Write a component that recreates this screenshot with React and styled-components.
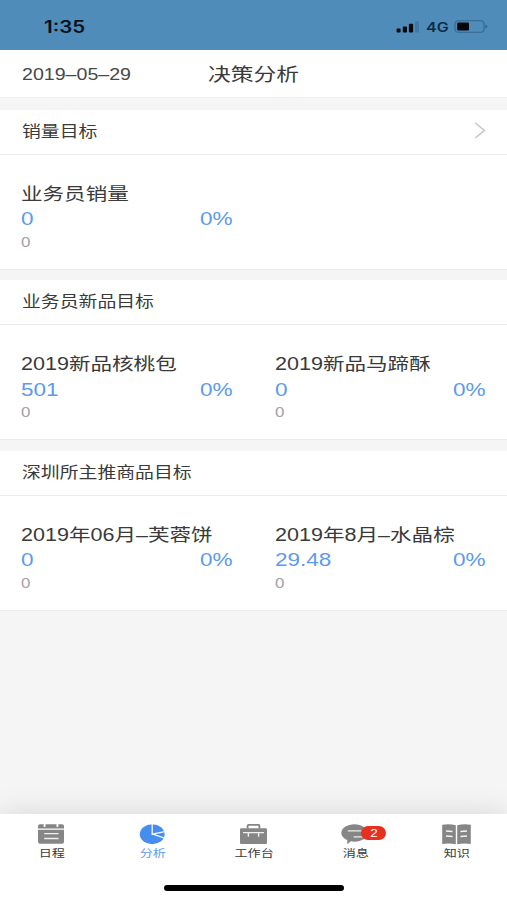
import styled, { createGlobalStyle } from "styled-components";

const sections = [
    {
        title: "销量目标",
        hasLink: true,
        items: [{ name: "业务员销量", value: "0", percent: "0%", target: "0" }],
    },
    {
        title: "业务员新品目标",
        items: [
            { name: "2019新品核桃包", value: "501", percent: "0%", target: "0" },
            { name: "2019新品马蹄酥", value: "0", percent: "0%", target: "0" },
        ],
    },
    {
        title: "深圳所主推商品目标",
        items: [
            { name: "2019年06月–芙蓉饼", value: "0", percent: "0%", target: "0" },
            { name: "2019年8月–水晶棕", value: "29.48", percent: "0%", target: "0" },
        ],
    },
];

const tabs = [
    { label: "日程", Icon: CalendarIcon },
    { label: "分析", Icon: PieIcon, active: true },
    { label: "工作台", Icon: ToolboxIcon },
    { label: "消息", Icon: ChatIcon, badge: 2 },
    { label: "知识", Icon: BookIcon },
];

export default function App() {
    return (
        <Container>
            <GlobalStyle />
            <StatusBar>
                <Clock>1:35</Clock>
                <StatusIcons>
                    <SignalIcon />
                    <Network>4G</Network>
                    <BatteryIcon />
                </StatusIcons>
            </StatusBar>
            <Header>
                <HeaderDate>2019–05–29</HeaderDate>
                <HeaderTitle>决策分析</HeaderTitle>
            </Header>
            <Main>
                {sections.map((section) => (
                    <Section key={section.title}>
                        <SectionHead>
                            <SectionTitle>{section.title}</SectionTitle>
                            {section.hasLink && <ChevronIcon />}
                        </SectionHead>
                        <SectionBody>
                            {section.items.map((item) => (
                                <Item key={item.name}>
                                    <ItemName>{item.name}</ItemName>
                                    <ItemRow>
                                        <ItemValue>{item.value}</ItemValue>
                                        <ItemValue $right>{item.percent}</ItemValue>
                                    </ItemRow>
                                    <ItemTarget>{item.target}</ItemTarget>
                                </Item>
                            ))}
                        </SectionBody>
                    </Section>
                ))}
            </Main>
            <TabBar>
                {tabs.map(({ label, Icon, active, badge }) => (
                    <Tab key={label} $active={active}>
                        <TabIcon>
                            <Icon />
                            {badge && (
                                <Badge>
                                    <BadgeText>{badge}</BadgeText>
                                </Badge>
                            )}
                        </TabIcon>
                        <TabLabel>{label}</TabLabel>
                    </Tab>
                ))}
            </TabBar>
            <BottomArea>
                <HomeIndicator />
            </BottomArea>
        </Container>
    );
}

function SignalIcon() {
    return (
        <svg width="23" height="12" viewBox="0 0 23 12">
            <rect x="0.6" y="7.6" width="4" height="4" rx="0.8" fill="#050a10" />
            <rect x="6.8" y="5.6" width="4.200" height="6" rx="0.8" fill="#050a10" />
            <rect x="12.900" y="2.800" width="4.200" height="8.800" rx="0.8" fill="#050a10" />
            <rect x="19" y="0.3" width="4" height="11.300" rx="0.8" fill="#4279a3" />
        </svg>
    );
}

function BatteryIcon() {
    return (
        <svg width="34" height="13" viewBox="0 0 34 13">
            <rect x="1" y="0.8" width="29" height="11.4" rx="3.2" fill="none" stroke="#34668e" strokeWidth="1.1" />
            <rect x="3.2" y="2.5" width="11.8" height="8" rx="1.3" fill="#03070c" />
            <path d="M31.4 4.4q2 .6 2 2.1t-2 2.1z" fill="#34668e" />
        </svg>
    );
}

function ChevronIcon() {
    return (
        <svg width="12" height="17" viewBox="0 0 12 17">
            <path d="M1.2 1 10.4 8.5 1.2 16" fill="none" stroke="#c4c4c8" strokeWidth="1.5" />
        </svg>
    );
}

function CalendarIcon() {
    return (
        <svg width="26" height="20" viewBox="0 0 26 20">
            <path
                d="M2 .3h3.700v2.200q0 .5.900.5t.9-.5V.3h11v2.200q0 .5.9.5t.9-.5V.3H24q2 0 2 1.800v2.400H0V2.100Q0 .3 2 .3z"
                fill="#868686"
            />
            <path d="M0 5.800h26v12q0 2-2 2H2q-2 0-2-2z" fill="#868686" />
            <path d="M6.200 9.700h14.300M6.200 14.500h14.300" stroke="#f0f0f0" strokeWidth="1.300" />
        </svg>
    );
}

function PieIcon() {
    return (
        <svg width="26" height="21" viewBox="0 0 26 21">
            <ellipse cx="13.200" cy="10.200" rx="12.400" ry="10" fill="#468df0" />
            <path d="M13.200 0v10.200L25.800 7.700M13.200 9.900 24.800 13.800" fill="none" stroke="#f2f7ff" strokeWidth="1.300" />
        </svg>
    );
}

function ToolboxIcon() {
    return (
        <svg width="27" height="20" viewBox="0 0 27 20">
            <path d="M7.600 4.500V1.900Q7.600.9 8.900.9h9.200q1.300 0 1.300 1v2.600" fill="none" stroke="#868686" strokeWidth="1.900" />
            <rect x="0" y="4.200" width="27" height="15.800" rx="1.300" fill="#868686" />
            <path d="M3 8.600h21M8.400 8.600v4.200M18.600 8.600v4.200" fill="none" stroke="#f0f0f0" strokeWidth="1.400" />
        </svg>
    );
}

function ChatIcon() {
    return (
        <svg width="27" height="21" viewBox="0 0 27 21">
            <path
                d="M13.500.2C20.500.2 26 4 26 9s-5.500 8.700-12.500 8.700q-2 0-3.700-.4L6.300 20.300V16C3 14.500.3 12 .3 9 .3 4 6.500.2 13.500.2z"
                fill="#868686"
            />
            <path d="M6.800 6.900h14M12.700 12.900h9" stroke="#ececec" strokeWidth="1.300" />
        </svg>
    );
}

function BookIcon() {
    return (
        <svg width="29" height="21" viewBox="0 0 29 21">
            <path d="M.2.800Q7.500-.3 13.800 1.300v19Q7.500 18.900.2 19.900z" fill="#868686" />
            <path d="M28.800.800Q21.500-.3 15.200 1.300v19q6.300-1.400 13.600-.4z" fill="#868686" />
            <path d="M4 7l6.500.4M4 12l6.500.4M25 7l-6.500.4M25 12l-6.500.4" stroke="#f4f4f4" strokeWidth="1.500" />
        </svg>
    );
}

const GlobalStyle = createGlobalStyle`
    * {
        box-sizing: border-box;
    }

    body {
        margin: 0;

        font-family: "Liberation Sans", "Noto Sans CJK SC", sans-serif;
        color: #3a3a3a;
    }

    svg {
        display: block;
        flex-shrink: 0;
    }
`;

const Container = styled.div`
    width: 100%;
    height: 900px;

    display: flex;
    flex-direction: column;

    overflow: hidden;
    background-color: #f5f5f5;
`;

/* the whole interface uses extended letterforms */
const Wide = styled.span`
    display: inline-block;

    white-space: nowrap;
    transform: scaleX(1.225);
    transform-origin: left center;
`;

const StatusBar = styled.div`
    height: 49.5px;
    flex-shrink: 0;
    padding: 4px 19px 0 43.5px;

    display: flex;
    justify-content: space-between;
    align-items: center;

    background-color: #4f8cb9;
`;

const Clock = styled(Wide)`
    font-family: Inter, sans-serif;
    font-size: 16.8px;
    font-weight: 600;
    line-height: 20px;
    color: #07111b;
`;

const StatusIcons = styled.div`
    display: flex;
    align-items: center;
`;

const Network = styled(Wide)`
    width: 28px;
    margin-left: 7px;

    font-family: Inter, sans-serif;
    font-size: 13px;
    font-weight: 600;
    line-height: 16px;
    color: #102c44;
    transform: scaleX(1.23);
`;

const Header = styled.div`
    height: 48px;
    flex-shrink: 0;
    padding: 2px 22px 0;

    display: grid;
    grid-template-columns: 186px 1fr;
    align-items: center;

    background-color: white;
    border-bottom: 1px solid #efefef;
`;

const HeaderDate = styled(Wide)`
    padding-top: 1px;

    font-size: 16px;
    color: #484848;
`;

const HeaderTitle = styled(Wide)`
    padding-top: 1px;

    font-size: 18.6px;
    line-height: 24px;
`;

const Main = styled.div`
    flex: 1;
    padding-top: 12px;

    display: flex;
    flex-direction: column;
    gap: 10.5px;
`;

const Section = styled.div`
    height: 160px;
    flex-shrink: 0;

    background-color: white;
    border-bottom: 1px solid #ededed;
`;

const SectionHead = styled.div`
    height: 45px;
    padding: 0 21px 0 22px;

    display: flex;
    justify-content: space-between;
    align-items: center;

    border-bottom: 1px solid #ebebeb;

    svg {
        margin-top: -2px;
    }
`;

const SectionTitle = styled(Wide)`
    font-size: 15.4px;
    line-height: 20px;
`;

const SectionBody = styled.div`
    padding-top: 27px;

    display: grid;
    grid-template-columns: 1fr 1fr;
`;

const Item = styled.div`
    padding: 0 21px;

    display: flex;
    flex-direction: column;
    align-items: flex-start;
`;

const ItemName = styled(Wide)`
    font-size: 17.6px;
    line-height: 25px;
`;

const ItemRow = styled.div`
    width: 100%;
    margin-top: -0.5px;

    display: flex;
    justify-content: space-between;
`;

const ItemValue = styled(Wide)`
    font-size: 18.4px;
    line-height: 25.5px;
    color: #5c9af0;
    transform-origin: ${({ $right }) => ($right ? "right" : "left")} center;
`;

const ItemTarget = styled(Wide)`
    font-size: 13.8px;
    line-height: 22px;
    color: #a3a3a3;
`;

const TabBar = styled.div`
    height: 54px;
    flex-shrink: 0;
    padding-top: 10px;

    display: grid;
    grid-template-columns: repeat(5, 1fr);

    background-color: white;
    box-shadow: 0 0 30px rgba(0, 0, 0, 0.13);
    clip-path: inset(-50px 0 0 0);
`;

const Tab = styled.div`
    display: flex;
    flex-direction: column;
    align-items: center;

    color: ${({ $active }) => ($active ? "#5c9af0" : "#3a3a3a")};
`;

const TabIcon = styled.div`
    height: 20px;

    position: relative;
`;

const TabLabel = styled(Wide)`
    margin-top: 2px;
    padding-left: 1px;

    font-size: 10.7px;
    line-height: 14px;
    transform-origin: center;
`;

const Badge = styled.div`
    width: 25px;
    height: 14px;
    border-radius: 7px;

    position: absolute;
    top: 1.5px;
    left: 20px;

    display: flex;
    align-items: center;
    justify-content: center;

    background-color: #e8301f;
`;

const BadgeText = styled(Wide)`
    font-size: 11px;
    line-height: 14px;
    color: white;
    transform-origin: center;
`;

const BottomArea = styled.div`
    height: 32px;
    flex-shrink: 0;
    padding-top: 17px;

    display: flex;
    justify-content: center;

    background-color: white;
`;

const HomeIndicator = styled.div`
    width: 180px;
    height: 6px;
    border-radius: 3px;

    background-color: black;
`;
